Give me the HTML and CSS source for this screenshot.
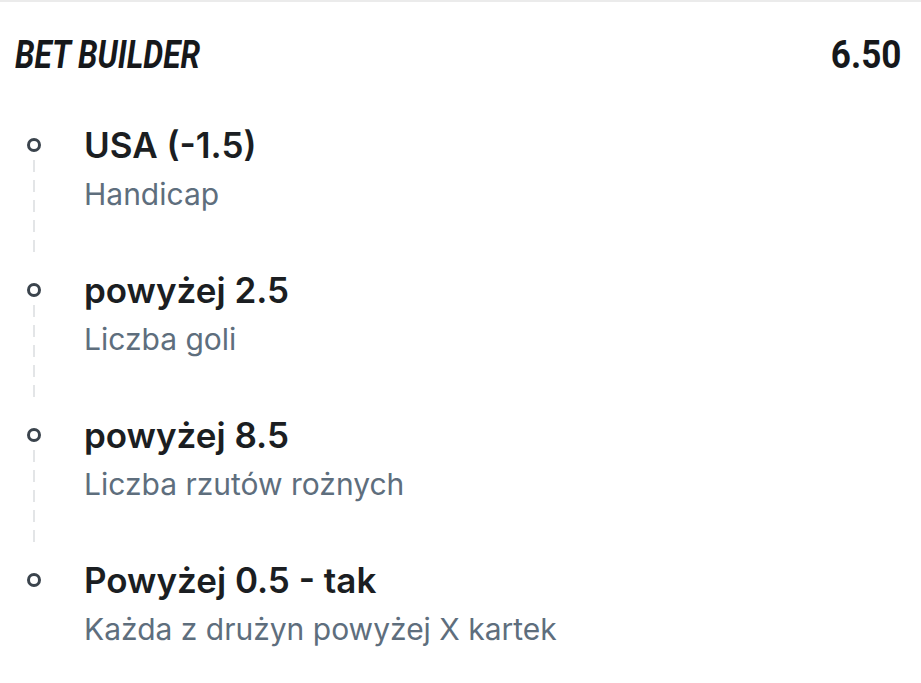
FILE: index.html
```html
<!DOCTYPE html>
<html lang="pl">
<head>
<meta charset="utf-8">
<title>Bet Builder</title>
<link rel="stylesheet" href="styles.css">
</head>
<body>
<section class="card">
  <header class="card-head">
    <span class="card-title">BET BUILDER</span>
    <span class="card-odds">6.50</span>
  </header>
  <ul class="legs">
    <li class="leg">
      <div class="leg-marker"><span class="dot"></span><span class="rail"></span></div>
      <div class="leg-body">
        <div class="leg-pick">USA (-1.5)</div>
        <div class="leg-market">Handicap</div>
      </div>
    </li>
    <li class="leg">
      <div class="leg-marker"><span class="dot"></span><span class="rail"></span></div>
      <div class="leg-body">
        <div class="leg-pick">powyżej 2.5</div>
        <div class="leg-market">Liczba goli</div>
      </div>
    </li>
    <li class="leg">
      <div class="leg-marker"><span class="dot"></span><span class="rail"></span></div>
      <div class="leg-body">
        <div class="leg-pick">powyżej 8.5</div>
        <div class="leg-market">Liczba rzutów rożnych</div>
      </div>
    </li>
    <li class="leg leg-last">
      <div class="leg-marker"><span class="dot"></span></div>
      <div class="leg-body">
        <div class="leg-pick">Powyżej 0.5 - tak</div>
        <div class="leg-market">Każda z drużyn powyżej X kartek</div>
      </div>
    </li>
  </ul>
</section>
</body>
</html>
```
FILE: styles.css
```css
html, body {
  margin: 0;
  padding: 0;
  background: #ffffff;
}

body {
  font-family: Inter, "Noto Sans", sans-serif;
  width: 921px;
  height: 683px;
  overflow: hidden;
}

.card {
  border-top: 2px solid #ebebeb;
}

.card-head {
  display: flex;
  justify-content: space-between;
  align-items: center;
  padding: 30px 20px 0 15px;
  height: 46px;
}

.card-title,
.card-odds {
  display: inline-block;
  font-family: Roboto, "Liberation Sans", sans-serif;
  font-weight: 700;
  font-size: 39px;
  line-height: 46px;
  color: #16181b;
}

.card-title {
  font-style: italic;
  transform: scaleX(0.81);
  transform-origin: left center;
}

.card-odds {
  transform: scaleX(0.9);
  transform-origin: right center;
}

.legs {
  list-style: none;
  margin: 47px 0 0;
  padding: 0;
}

/* each leg: timeline marker column + pick / market text */
.leg {
  display: grid;
  grid-template-columns: 84px 1fr;
  padding-bottom: 58px;
}

.leg-last {
  padding-bottom: 0;
}

.leg-marker {
  display: flex;
  flex-direction: column;
  align-items: center;
  width: 14px;
  margin-left: 27px;
  margin-bottom: -58px;
}

.leg-last .leg-marker {
  margin-bottom: 0;
}

.dot {
  box-sizing: border-box;
  width: 14px;
  height: 14px;
  margin-top: 13px;
  border: 3px solid #3b444d;
  border-radius: 50%;
  flex: none;
}

.rail {
  flex: 1;
  width: 2px;
  margin: 8px 0 14px;
  background: repeating-linear-gradient(to bottom, #e3e5e7 0 12px, transparent 12px 20px);
}

.leg-pick {
  font-size: 35px;
  line-height: 40px;
  font-weight: 600;
  color: #1b1e22;
}

.leg-market {
  margin-top: 11px;
  font-size: 30px;
  line-height: 36px;
  font-weight: 400;
  color: #5e6e7d;
}
```
